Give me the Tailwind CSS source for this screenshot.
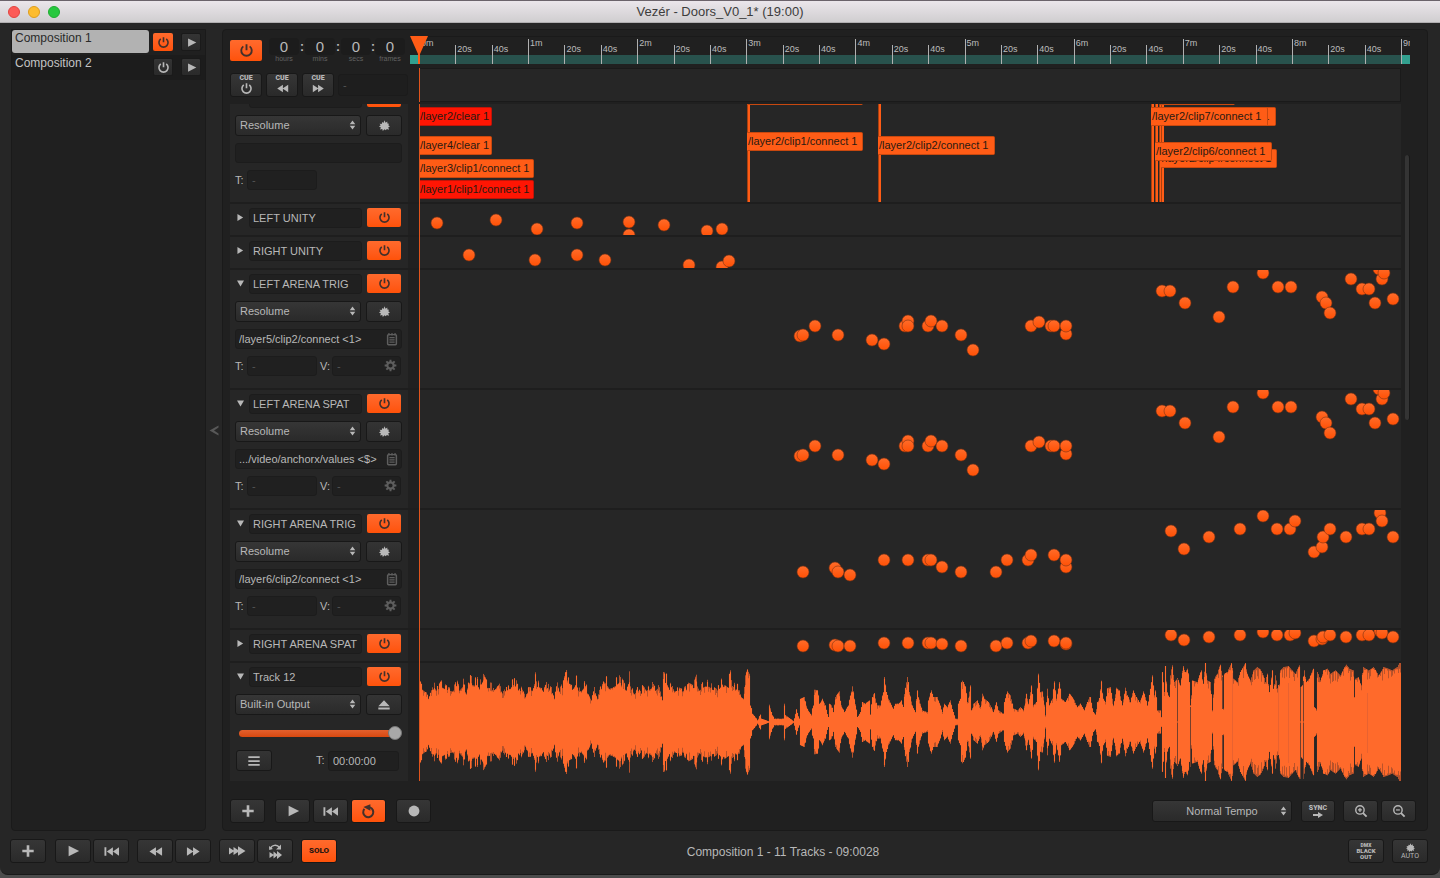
<!DOCTYPE html>
<html lang="en">
<head>
    <meta charset="UTF-8">
    <meta name="viewport" content="width=device-width, initial-scale=1.0">
    <title>Vezér - Doors_V0_1* (19:00)</title>
    <script src="https://cdn.jsdelivr.net/npm/@tailwindcss/browser@4"></script>
</head>
<body class="bg-[#4c4c4c] h-screen flex flex-col overflow-hidden font-['Liberation_Sans',Arial,sans-serif] text-[11px] text-[#b8b8b8]">

    <!-- Icons -->
    <svg class="hidden" aria-hidden="true">
        <symbol id="i-power" viewBox="0 0 16 16"><path d="M4.6 3.6a5.6 5.6 0 1 0 6.8 0M8 1.4v6.2" fill="none" stroke="currentColor" stroke-width="2"/></symbol>
        <symbol id="i-play" viewBox="0 0 16 16"><path d="M3 2 15 8 3 14z" fill="currentColor"/></symbol>
        <symbol id="i-plus" viewBox="0 0 16 16"><path d="M8 1.500v13M1.500 8h13" stroke="currentColor" stroke-width="3"/></symbol>
        <symbol id="i-start" viewBox="0 0 16 16"><path d="M.5 3.5h2v9h-2zM9.5 3.5v9L3 8zM16 3.5v9L9.5 8z" fill="currentColor"/></symbol>
        <symbol id="i-rew" viewBox="0 0 16 16"><path d="M8.5 3.5v9L1.5 8zM15 3.5v9L8 8z" fill="currentColor"/></symbol>
        <symbol id="i-fwd" viewBox="0 0 16 16"><path d="M1 3.5v9L8 8zM7.5 3.5v9l7-4.500z" fill="currentColor"/></symbol>
        <symbol id="i-fff" viewBox="0 0 18 16"><path d="M1 4.500v7L6.500 8zM5.500 4v8l6-4zM10 3.200v9.600L17.500 8z" fill="currentColor"/></symbol>
        <symbol id="i-loopfff" viewBox="0 0 16 16"><path d="M2.500 9v6L7 12zM6.500 8.500v7l4.500-3.500zM10 8v8l5-4z" fill="currentColor"/><path d="M3.500 5.500C4.500 2 10 1 12.500 4.500" fill="none" stroke="currentColor" stroke-width="1.500"/><path d="M14 1.500v5H9zM2 3l.2 4L6 6z" fill="currentColor"/></symbol>
        <symbol id="i-loop" viewBox="0 0 16 16"><path d="M3.600 5.200A5.400 5.400 0 1 0 9.500 3.600" fill="none" stroke="currentColor" stroke-width="2.200"/><path d="M10 .2v7L2.500 3.200z" fill="currentColor"/></symbol>
        <symbol id="i-rec" viewBox="0 0 16 16"><circle cx="8" cy="8" r="6.200" fill="currentColor"/></symbol>
        <symbol id="i-bug" viewBox="0 0 16 16"><path d="M8 .5 9.500 4l2.500-1.800.2 3 2.300.3-1 2.300L16 9.500l-2.500 1.200L14.500 14l-3.200-1-1.300 2-2-1.400L5.500 16l-.7-3-3.300.8 1.300-3L0 9.500l2.500-1.700L.8 5.500l3.200.2L4.500 3l2 1.200z" fill="currentColor"/></symbol>
        <symbol id="i-list" viewBox="0 0 16 16"><rect x="3" y="3" width="10" height="11.500" rx="1" fill="none" stroke="currentColor" stroke-width="1.700"/><path d="M4.500 1v3M8 1v3M11.500 1v3M5 6.500h6M5 9h6M5 11.500h6" stroke="currentColor" stroke-width="1.400"/></symbol>
        <symbol id="i-gear" viewBox="0 0 16 16"><circle cx="8" cy="8" r="3.900" fill="none" stroke="currentColor" stroke-width="2.600"/><path d="M8 .8v3M8 12.200v3M.8 8h3M12.200 8h3M2.900 2.900 5 5M11 11l2.100 2.100M2.900 13.100 5 11M11 5l2.100-2.100" stroke="currentColor" stroke-width="2.400"/></symbol>
        <symbol id="i-eject" viewBox="0 0 16 16"><path d="M8 2.500 14.500 9.500h-13zM1.500 10.800h13V13h-13z" fill="currentColor"/></symbol>
        <symbol id="i-menu" viewBox="0 0 16 16"><path d="M1.500 3.500h13M1.500 8h13M1.500 12.500h13" stroke="currentColor" stroke-width="2"/></symbol>
        <symbol id="i-updown" viewBox="0 0 8 12"><path d="M4 .5 7.300 5H.7zM4 11.500.7 7h6.600z" fill="currentColor"/></symbol>
        <symbol id="i-zoomin" viewBox="0 0 16 16"><circle cx="6.800" cy="6.800" r="4.800" fill="none" stroke="currentColor" stroke-width="1.600"/><path d="m10.400 10.400 4 4" stroke="currentColor" stroke-width="2.200"/><path d="M6.800 4.600V9M4.600 6.800H9" stroke="currentColor" stroke-width="1.400"/></symbol>
        <symbol id="i-zoomout" viewBox="0 0 16 16"><circle cx="6.800" cy="6.800" r="4.800" fill="none" stroke="currentColor" stroke-width="1.600"/><path d="m10.400 10.400 4 4" stroke="currentColor" stroke-width="2.200"/><path d="M4.600 6.800H9" stroke="currentColor" stroke-width="1.400"/></symbol>
        <symbol id="i-arrow" viewBox="0 0 10 6"><path d="M0 2h5V0l5 3-5 3V4H0z" fill="currentColor"/></symbol>
    </svg>

    <!-- Title bar -->
    <header class="relative h-[23px] shrink-0 flex items-center justify-center border-t border-[#6b636b] border-b border-b-[#b0aeb0] bg-linear-to-b from-[#ebe6eb] to-[#d0ced0]">
        <div class="absolute left-2 flex gap-2">
            <button aria-label="Close" class="w-3 h-3 rounded-full bg-[#fc5b57] border border-[#e2443f]"></button>
            <button aria-label="Minimize" class="w-3 h-3 rounded-full bg-[#fdbc2e] border border-[#df9d1c]"></button>
            <button aria-label="Zoom" class="w-3 h-3 rounded-full bg-[#27c83f] border border-[#1fac31]"></button>
        </div>
        <h1 class="text-[13px] text-[#3c3c3c]">Vezér - Doors_V0_1* (19:00)</h1>
    </header>

    <div class="flex-1 min-h-0 mb-[3px] flex flex-col bg-[#262626] rounded-b-lg border-b border-[#191919]">
        <div class="flex-1 min-h-0 flex pt-[6px] pl-[11px] pr-3">

            <!-- Compositions -->
            <aside class="w-[195px] shrink-0 bg-[#202020] border border-[#1a1a1a] rounded-b-sm">
                <div class="h-[25px] flex items-start pr-1">
                    <input aria-label="Composition name" value="Composition 1" class="w-[137px] h-[23px] px-[3px] pb-2 rounded-[3px] bg-[#b2b2b2] text-[12px] text-[#2a2a2a] shrink-0">
                    <button aria-label="Enable Composition 1" class="ml-[4px] mt-[3px] w-5 h-[18px] rounded-xs bg-linear-to-b from-[#ff6a2c] to-[#ff5208] text-[#43302a] flex items-center justify-center"><svg class="w-[13px] h-[13px]"><use href="#i-power"/></svg></button>
                    <button aria-label="Play Composition 1" class="ml-auto mt-[3px] w-5 h-[18px] rounded-xs bg-linear-to-b from-[#343434] to-[#2a2a2a] border border-[#1a1a1a] flex items-center justify-center"><svg class="w-[11px] h-[11px]"><use href="#i-play"/></svg></button>
                </div>
                <div class="h-[25px] flex items-start pr-1 bg-[#1c1c1c]">
                    <input aria-label="Composition name" value="Composition 2" class="w-[137px] h-[23px] px-[3px] pb-2 rounded-[3px] text-[12px] text-[#c4c4c4] shrink-0">
                    <button aria-label="Enable Composition 2" class="ml-[4px] mt-[3px] w-5 h-[18px] rounded-xs bg-linear-to-b from-[#343434] to-[#2a2a2a] border border-[#1a1a1a] flex items-center justify-center"><svg class="w-[13px] h-[13px]"><use href="#i-power"/></svg></button>
                    <button aria-label="Play Composition 2" class="ml-auto mt-[3px] w-5 h-[18px] rounded-xs bg-linear-to-b from-[#343434] to-[#2a2a2a] border border-[#1a1a1a] flex items-center justify-center"><svg class="w-[11px] h-[11px]"><use href="#i-play"/></svg></button>
                </div>
            </aside>

            <button aria-label="Collapse sidebar" class="w-4 shrink-0 flex items-center justify-center text-[#585858]">
                <svg class="w-[10px] h-[11px]" viewBox="0 0 10 11"><path d="M9.500.5v2L5 5.500l4.500 3v2L.5 5.500z" fill="currentColor"/></svg>
            </button>

            <!-- Composition editor -->
            <main class="flex-1 min-w-0 flex flex-col bg-[#202020] border border-[#1a1a1a] rounded-sm pl-[7px]">
                <div class="h-[74px] shrink-0 flex pr-[17px]">
                    <div class="w-[180px] shrink-0">
                        <div class="flex items-start pt-[8px] h-[43px]">
                            <button aria-label="Enable composition" class="mt-[2px] w-8 h-[21px] rounded-xs bg-linear-to-b from-[#ff6a2c] to-[#ff5208] text-[#43302a] flex items-center justify-center"><svg class="w-[15px] h-[15px]"><use href="#i-power"/></svg></button>
                            <div class="ml-[7px] flex-1 flex text-center pr-1">
                                <div class="w-[30px]"><output class="block h-[17px] leading-[18px] rounded-sm bg-[#1c1c1c] text-[15px]">0</output><span class="block text-[7px] leading-[8px] text-[#626262]">hours</span></div>
                                <span class="w-[6px] leading-[18px] text-[12px] font-bold">:</span>
                                <div class="w-[30px]"><output class="block h-[17px] leading-[18px] rounded-sm bg-[#1c1c1c] text-[15px]">0</output><span class="block text-[7px] leading-[8px] text-[#626262]">mins</span></div>
                                <span class="w-[6px] leading-[18px] text-[12px] font-bold">:</span>
                                <div class="w-[30px]"><output class="block h-[17px] leading-[18px] rounded-sm bg-[#1c1c1c] text-[15px]">0</output><span class="block text-[7px] leading-[8px] text-[#626262]">secs</span></div>
                                <span class="w-[4px] leading-[18px] text-[12px] font-bold">:</span>
                                <div class="w-[30px]"><output class="block h-[17px] leading-[18px] rounded-sm bg-[#1c1c1c] text-[15px]">0</output><span class="block text-[7px] leading-[8px] text-[#626262]">frames</span></div>
                            </div>
                        </div>
                        <div class="flex gap-1 pr-[2px]">
                            <button aria-label="Cue toggle" class="w-8 h-[24px] shrink-0 rounded-[3px] bg-linear-to-b from-[#363636] to-[#2a2a2a] border border-[#181818] flex flex-col items-center justify-center"><span class="text-[7px] leading-[7px] font-black font-[Roboto,sans-serif]">CUE</span><svg class="w-[13px] h-[13px]"><use href="#i-power"/></svg></button>
                            <button aria-label="Previous cue" class="w-8 h-[24px] shrink-0 rounded-[3px] bg-linear-to-b from-[#363636] to-[#2a2a2a] border border-[#181818] flex flex-col items-center justify-center"><span class="text-[7px] leading-[7px] font-black font-[Roboto,sans-serif]">CUE</span><svg class="w-[13px] h-[13px]"><use href="#i-rew"/></svg></button>
                            <button aria-label="Next cue" class="w-8 h-[24px] shrink-0 rounded-[3px] bg-linear-to-b from-[#363636] to-[#2a2a2a] border border-[#181818] flex flex-col items-center justify-center"><span class="text-[7px] leading-[7px] font-black font-[Roboto,sans-serif]">CUE</span><svg class="w-[13px] h-[13px]"><use href="#i-fwd"/></svg></button>
                            <input aria-label="Cue name" placeholder="-" class="flex-1 min-w-0 mt-px h-[22px] px-1 rounded-[3px] bg-[#1e1e1e] border border-[#1b1b1b] placeholder:text-[#555]">
                        </div>
                    </div>
                    <div class="flex-1 min-w-0 relative">
                        <div class="mt-[6px] h-7 px-[9px] border-t border-[#1a1a1a] relative overflow-hidden bg-[linear-gradient(#32a08f,#32a08f)] bg-[length:100%_9px] bg-bottom bg-no-repeat">
                            <div id="ruler" class="relative h-full bg-[linear-gradient(#28524d,#28524d)] bg-[length:100%_9px] bg-bottom bg-no-repeat"></div>
                        </div>
                        <div class="mt-1 ml-[9px] mr-[9px] h-[34px] bg-[#262626] border-y border-r border-[#1a1a1a]"></div>
                        <svg class="absolute left-0 top-[6px] w-[18px] h-[66px]" viewBox="0 0 18 66"><path d="M0 0h18l-8 18v10h-2V18z" fill="#ff5c16"/><path d="M9 32h1v34H9z" fill="#e0541c"/></svg>
                    </div>
                </div>

                <div class="flex-1 min-h-0 flex pr-[17px]">
                    <div class="flex-1 min-w-0 relative overflow-hidden">
                        <div id="tracks" class="-mt-5"></div>
                        <div class="absolute left-[189px] top-0 bottom-0 w-px bg-[#e0541c]"></div>
                    </div>
                    <div class="w-[9px] pl-[4px] pt-[51px] shrink-0"><div class="w-[5px] h-[265px] rounded-full bg-[#343434] border-r border-[#181818]"></div></div>
                </div>

                <!-- Editor footer -->
                <div class="h-[49px] shrink-0 flex items-start pt-[18px] pr-[11px]">
                    <button aria-label="Add track" class="w-[35px] h-6 rounded-[3px] bg-linear-to-b from-[#363636] to-[#2a2a2a] border border-[#181818] flex items-center justify-center"><svg class="w-[14px] h-[14px]"><use href="#i-plus"/></svg></button>
                    <button aria-label="Play" class="ml-[10px] w-[35px] h-6 rounded-[3px] bg-linear-to-b from-[#363636] to-[#2a2a2a] border border-[#181818] flex items-center justify-center"><svg class="w-[14px] h-[14px]"><use href="#i-play"/></svg></button>
                    <button aria-label="Go to start" class="ml-[3px] w-[35px] h-6 rounded-[3px] bg-linear-to-b from-[#363636] to-[#2a2a2a] border border-[#181818] flex items-center justify-center"><svg class="w-[15px] h-[15px]"><use href="#i-start"/></svg></button>
                    <button aria-label="Loop" class="ml-[3px] w-[35px] h-6 rounded-[3px] bg-linear-to-b from-[#ff6a2c] to-[#ff5208] border border-[#181818] text-[#43302a] flex items-center justify-center"><svg class="w-[15px] h-[15px]"><use href="#i-loop"/></svg></button>
                    <button aria-label="Record" class="ml-[10px] w-[35px] h-6 rounded-[3px] bg-linear-to-b from-[#363636] to-[#2a2a2a] border border-[#181818] flex items-center justify-center"><svg class="w-[14px] h-[14px]"><use href="#i-rec"/></svg></button>

                    <div class="relative ml-auto mt-px">
                        <select aria-label="Tempo" class="appearance-none w-[140px] h-[22px] text-center [text-align-last:center] rounded-[3px] bg-linear-to-b from-[#363636] to-[#2a2a2a] border border-[#181818]"><option>Normal Tempo</option></select>
                        <svg class="absolute right-[5px] top-[6px] w-[7px] h-[10px] pointer-events-none"><use href="#i-updown"/></svg>
                    </div>
                    <button aria-label="Sync" class="ml-[9px] mt-px w-[34px] h-[22px] rounded-[3px] bg-linear-to-b from-[#363636] to-[#2a2a2a] border border-[#181818] flex flex-col items-center justify-center"><span class="text-[7px] leading-[8px] font-black font-[Roboto,sans-serif]">SYNC</span><svg class="w-[10px] h-[6px]"><use href="#i-arrow"/></svg></button>
                    <button aria-label="Zoom in" class="ml-[8px] mt-px w-[35px] h-[22px] rounded-[3px] bg-linear-to-b from-[#363636] to-[#2a2a2a] border border-[#181818] flex items-center justify-center"><svg class="w-[14px] h-[14px]"><use href="#i-zoomin"/></svg></button>
                    <button aria-label="Zoom out" class="ml-[3px] mt-px w-[35px] h-[22px] rounded-[3px] bg-linear-to-b from-[#363636] to-[#2a2a2a] border border-[#181818] flex items-center justify-center"><svg class="w-[14px] h-[14px]"><use href="#i-zoomout"/></svg></button>
                </div>
            </main>
        </div>

        <!-- Global transport -->
        <footer class="h-[43px] shrink-0 grid grid-cols-[1fr_auto_1fr] items-start pt-2 pl-[10px] pr-3">
            <div class="flex">
                <button aria-label="Add composition" class="w-[36px] h-6 rounded-[3px] bg-linear-to-b from-[#363636] to-[#2a2a2a] border border-[#181818] flex items-center justify-center"><svg class="w-[14px] h-[14px]"><use href="#i-plus"/></svg></button>
                <button aria-label="Play all" class="ml-[9px] w-[36px] h-6 rounded-[3px] bg-linear-to-b from-[#363636] to-[#2a2a2a] border border-[#181818] flex items-center justify-center"><svg class="w-[14px] h-[14px]"><use href="#i-play"/></svg></button>
                <button aria-label="All to start" class="ml-[2px] w-[36px] h-6 rounded-[3px] bg-linear-to-b from-[#363636] to-[#2a2a2a] border border-[#181818] flex items-center justify-center"><svg class="w-[15px] h-[15px]"><use href="#i-start"/></svg></button>
                <button aria-label="Rewind" class="ml-[8px] w-[36px] h-6 rounded-[3px] bg-linear-to-b from-[#363636] to-[#2a2a2a] border border-[#181818] flex items-center justify-center"><svg class="w-[15px] h-[15px]"><use href="#i-rew"/></svg></button>
                <button aria-label="Forward" class="ml-[2px] w-[36px] h-6 rounded-[3px] bg-linear-to-b from-[#363636] to-[#2a2a2a] border border-[#181818] flex items-center justify-center"><svg class="w-[15px] h-[15px]"><use href="#i-fwd"/></svg></button>
                <button aria-label="Play next" class="ml-[8px] w-[36px] h-6 rounded-[3px] bg-linear-to-b from-[#363636] to-[#2a2a2a] border border-[#181818] flex items-center justify-center"><svg class="w-[18px] h-4"><use href="#i-fff"/></svg></button>
                <button aria-label="Loop all" class="ml-[2px] w-[36px] h-6 rounded-[3px] bg-linear-to-b from-[#363636] to-[#2a2a2a] border border-[#181818] flex items-center justify-center"><svg class="w-4 h-4"><use href="#i-loopfff"/></svg></button>
                <button class="ml-[8px] w-[36px] h-6 rounded-[3px] bg-linear-to-b from-[#ff6a2c] to-[#ff5208] border border-[#181818] text-[#2b1710] text-[8px] leading-[8px] font-black font-[Roboto,sans-serif]">SOLO</button>
            </div>
            <p class="pl-32 pt-[5px] text-[12px] leading-4">Composition 1 - 11 Tracks - 09:0028</p>
            <div class="flex justify-end gap-2">
                <button aria-label="DMX blackout" class="w-[36px] h-6 rounded-[3px] bg-linear-to-b from-[#363636] to-[#2a2a2a] border border-[#181818] flex flex-col items-center justify-center font-black font-[Roboto,sans-serif]"><span class="text-[5px] leading-[5px]">DMX</span><span class="text-[6px] leading-[6px]">BLACK</span><span class="text-[6px] leading-[6px]">OUT</span></button>
                <button aria-label="Auto map" class="w-[36px] h-6 rounded-[3px] bg-linear-to-b from-[#363636] to-[#2a2a2a] border border-[#181818] flex flex-col items-center justify-center font-[Roboto,sans-serif]"><svg class="w-[9px] h-[9px]"><use href="#i-bug"/></svg><span class="text-[7px] leading-[8px]">AUTO</span></button>
            </div>
        </footer>
    </div>

    <script>
        // lane coordinates are given on a 982px wide timeline (9 minutes)
        const LANE = 982;
        const pct = x => (x / LANE * 100).toFixed(3) + '%';

        const arenaLeft = [[381,66],[384,65],[396,56],[419,65],[453,70],[465,74],[486,56],[489,51],[489,56],[509,56],[512,51],[523,56],[542,65],[554,80],[612,56],[620,52],[632,56],[635,56],[647,64],[647,56],
            [743,21],[751,21],[766,33],[800,47],[814,17],[844,3],[859,17],[872,17],[903,27],[907,33],[911,43],[932,9],[943,19],[950,19],[956,33],[960,-1],[963,9],[965,3],[974,29]];
        const arenaRight = [[384,62],[416,58],[419,62],[431,65],[465,50],[489,50],[509,50],[512,50],[523,57],[542,62],[577,62],[588,50],[609,50],[612,45],[635,45],[647,57],[647,50],
            [752,21],[765,39],[790,27],[821,19],[844,6],[858,19],[871,19],[876,11],[895,42],[903,37],[904,27],[911,19],[927,27],[943,19],[950,19],[961,3],[963,11],[974,27]];

        const tracks = [
            { name: '', open: true, osc: '', flat: true, clips: [
                { x: 0, y: 23, w: 73, t: '/layer2/clear 1', red: true },
                { x: 0, y: 52, w: 73, t: '/layer4/clear 1' },
                { x: 0, y: 75, w: 115, t: '/layer3/clip1/connect 1' },
                { x: 0, y: 96, w: 115, t: '/layer1/clip1/connect 1', red: true },
                { x: 328, y: 2, w: 116, t: '' },
                { x: 328, y: 48, w: 116, t: '/layer2/clip1/connect 1', line: true },
                { x: 459, y: 52, w: 117, t: '/layer2/clip2/connect 1', line: true },
                { x: 741, y: 2, w: 75, t: '' },
                { x: 740, y: 23, w: 117, t: '/layer2/clip5/connect 1', line: true },
                { x: 742, y: 65, w: 116, t: '/layer2/clip4/connect 1', line: true },
                { x: 732, y: 23, w: 117, t: '/layer2/clip7/connect 1', line: true },
                { x: 736, y: 58, w: 117, t: '/layer2/clip6/connect 1', line: true } ] },
            { name: 'LEFT UNITY', dots: [[18,19],[77,16],[118,25],[158,19],[210,31],[210,18],[245,21],[288,27],[303,25]] },
            { name: 'RIGHT UNITY', dots: [[50,18],[116,23],[158,18],[186,23],[270,28],[303,30],[310,24]] },
            { name: 'LEFT ARENA TRIG', open: true, osc: '/layer5/clip2/connect <1>', dots: arenaLeft },
            { name: 'LEFT ARENA SPAT', open: true, osc: '.../video/anchorx/values <$>', dots: arenaLeft },
            { name: 'RIGHT ARENA TRIG', open: true, osc: '/layer6/clip2/connect <1>', dots: arenaRight },
            { name: 'RIGHT ARENA SPAT', dots: arenaRight.map(([x, y]) => [x, Math.round(y / 4)]) },
            { name: 'Track 12', open: true, audio: true }
        ];

        const icon = (id, cls) => `<svg class="${cls}"><use href="#i-${id}"/></svg>`;
        const esc = s => s.replace(/</g, '&lt;').replace(/>/g, '&gt;');
        const button = 'w-[36px] h-[21px] shrink-0 rounded-[3px] bg-linear-to-b from-[#343434] to-[#2a2a2a] border border-[#181818] flex items-center justify-center';
        const field = 'h-5 rounded-[3px] bg-[#202020] border border-[#1c1c1c] placeholder:text-[#555]';

        function header(t) {
            return `<div class="flex items-start h-5">
                <button aria-label="Toggle ${t.name}" class="w-[19px] h-[18px] pl-[7px] flex items-center"><svg class="w-[7px] h-[7px]" viewBox="0 0 8 8"><path d="${t.open ? 'M0 .5h8L4 7.500z' : 'M.5 0v8L7 4z'}" fill="currentColor"/></svg></button>
                <input aria-label="Track name" value="${t.name}" class="${field} w-[113px] px-[3px]">
                <button aria-label="Enable ${t.name}" class="ml-[5px] w-[34px] h-[19px] rounded-xs bg-linear-to-b from-[#ff6a2c] to-[#ff5208] text-[#43302a] flex items-center justify-center">${icon('power', 'w-[13px] h-[13px]')}</button>
            </div>`;
        }

        function output(t) {
            return `<div class="flex justify-between mt-[7px] pl-[5px] pr-[6px]">
                <div class="relative">
                    <select aria-label="Output" class="appearance-none w-[126px] h-[21px] px-1 rounded-[3px] bg-linear-to-b from-[#363636] to-[#2a2a2a] border border-[#181818]"><option>${t.audio ? 'Built-in Output' : 'Resolume'}</option></select>
                    ${icon('updown', 'absolute right-[5px] top-[5px] w-[7px] h-[10px] pointer-events-none')}
                </div>
                <button aria-label="${t.audio ? 'Eject' : 'Learn'}" class="${button}">${t.audio ? icon('eject', 'w-[14px] h-[14px]') : icon('bug', 'w-[11px] h-[11px]')}</button>
            </div>`;
        }

        function oscFields(t, i) {
            return `<div class="relative mt-[7px] pl-[5px] pr-[6px]">
                <input aria-label="OSC address" value="${esc(t.osc)}" class="${field} w-full pl-[3px]">
                ${t.flat ? '' : icon('list', 'absolute right-[9px] top-[3px] w-[14px] h-[14px] text-[#5e5e5e]')}
            </div>
            <div class="relative flex items-center mt-[7px] pl-[5px] pr-[7px]">
                <label for="t${i}" class="w-3">T:</label>
                <input id="t${i}" placeholder="-" class="${field} w-[70px] px-1">
                ${t.flat ? '' : `<label for="v${i}" class="w-3 ml-auto">V:</label>
                <input id="v${i}" placeholder="-" class="${field} w-[69px] px-1">
                ${icon('gear', 'absolute right-[11px] top-[3px] w-[13px] h-[13px] text-[#5e5e5e]')}`}
            </div>`;
        }

        function audioFields(t, i) {
            return `<div class="relative flex items-center mt-[11px] h-[14px] ml-[9px] mr-[6px]">
                <div class="h-[7px] flex-1 mr-1 rounded-sm bg-linear-to-b from-[#e2602c] to-[#d8480e]"></div>
                <input type="range" aria-label="Volume" value="100" class="absolute inset-0 w-full appearance-none bg-transparent [&::-webkit-slider-thumb]:appearance-none [&::-webkit-slider-thumb]:w-[14px] [&::-webkit-slider-thumb]:h-[14px] [&::-webkit-slider-thumb]:rounded-full [&::-webkit-slider-thumb]:bg-[#a8a8a8] [&::-webkit-slider-thumb]:border [&::-webkit-slider-thumb]:border-[#777]">
            </div>
            <div class="flex items-center mt-[10px] pl-[6px] pr-[9px]">
                <button aria-label="Track menu" class="${button}">${icon('menu', 'w-[14px] h-[14px]')}</button>
                <label for="t${i}" class="ml-auto w-3">T:</label>
                <input id="t${i}" value="00:00:00" class="${field} w-[71px] px-1">
            </div>`;
        }

        function clips(list) {
            return list.filter(c => c.line).map(c => `<div class="absolute inset-y-0 w-[3px] bg-[#ff5c16] border-l border-[#a8400f]" style="left:${pct(c.x)}"></div>`).join('') +
                list.map(c => `<div class="absolute h-[19px] pl-px leading-[17px] rounded-r-xs whitespace-nowrap overflow-hidden text-[#2a1a12] border-y border-r ${c.red ? 'bg-[#ff1503] border-[#c01408]' : 'bg-[#ff5c16] border-[#c8480f]'}" style="left:${pct(c.x)};top:${c.y}px;width:${c.w}px">${c.t}</div>`).join('');
        }

        function dots(list) {
            return `<svg class="w-full h-full">
                ${list.map(([x, y]) => `<circle cx="${pct(x)}" cy="${y}" r="6" fill="url(#dot)" stroke="#7a3314" stroke-width=".6"/>`).join('')}
            </svg>`;
        }

        // loudness envelope: [start x, "offset top offset top ..."], three units per pixel, 200 is silence
        const envelope = [
            [0, '0 70 8 90 20 105 28 130 35 105 45 82 52 95 65 75 75 85 88 95 100 100 112 70 120 95 132 70 140 115 148 52 155 62 165 68 173 65 180 85 188 50 195 60 205 80 215 82 225 105 240 85 250 110 260 95 272 85 283 65 290 75 300 100 310 90 318 125 328 95 340 95 345 60 350 45 355 75 365 80 370 105 382 80 395 95 405 130 413 50 420 100 432 75 438 50 443 40 450 85 460 90 470 60 478 95 485 100 498 70 505 110 515 135 525 95 533 130 545 85 551 45 558 55 570 85 578 80 588 70 597 55 603 65 610 70 620 95 629 48 636 90 645 115 655 95 665 110 673 70 680 95 690 90 698 80 708 95 715 85 722 100 728 135 733 50 742 55 750 90 758 70 765 100 775 95 788 100 800 90 808 82 820 88 830 58 840 95 850 80 858 72 870 75 880 90 890 100 900 85 909 62 916 90 925 95 930 55 935 38 940 70 948 90 955 85 965 125 972 130 978 60 983 42 990 55 994 150 1000 175 1015 195 1022 178 1026 190 1048 198 1050 148 1056 170 1060 180 1065 190 1082 190'],
            [361, '0 190 8 190 12 145 16 180 40 198 48 162 56 190 60 130 72 125 80 160 92 178 98 150 103 103 112 105 118 145 126 130 135 150 143 185 148 145 154 150 160 170 164 125 176 108 182 150 193 170 203 150 210 120 217 93 222 130 232 185 240 170 246 140 255 145 266 135 270 178 275 125 281 113 290 150 300 150 308 110 312 65 318 110 325 130 338 160 345 145 355 145 363 135 368 155 374 97 382 65 388 110 395 150 405 170 410 105 415 125 425 165 440 170 444 135 452 105 460 125 470 125 480 150 485 170 492 145 500 155 510 135 518 170 526 190 530 190 533 145 540 130 542 80 547 76 555 92 562 140 570 90 574 165 580 145 590 135 600 155 607 115 612 130 625 140 640 170 647 140 655 165 668 175 672 140 680 108 690 120 700 160 712 165 720 155 730 165 737 115 745 145 753 90 760 150 768 140 774 55 780 110 787 108 796 180 800 100 807 150 815 130 822 78 828 130 838 80 843 130 855 140 868 115 880 130 890 155 900 145 912 165 920 140 928 125'],
            [671, '0 125 8 170 15 178 22 140 28 128 32 76 38 130 45 140 52 98 60 95 66 130 70 150 78 97 86 105 96 150 105 97 112 120 120 140 128 105 138 125 148 140 160 108 172 150 180 100 186 60 192 120 196 105 202 165 210 165 212 185 216 50 222 110 225 32 230 110 236 125 240 60 245 30 252 80 262 68 270 90 278 32 284 50 292 40 298 80 301 150 306 75 320 80 332 45 338 85 345 22 350 75 360 80 367 165 371 70 380 55 389 28 396 60 398 160 402 55 410 50 424 22 430 70 440 80 450 50 465 22 470 55 480 75 490 45 500 35 510 42 520 60 525 80 530 55 537 110 546 45 550 100 556 60 565 130 569 45 580 35 595 32 605 45 615 55 626 30 630 95 636 90 641 45 648 80 656 70 668 40 673 155 680 165 682 50 690 75 700 45 712 40 720 55 735 45 750 60 762 35 768 28 778 40 788 45 791 125 796 70 805 65 812 90 818 35 835 45 850 35 865 60 880 35 895 40 905 45 920 35 928 22 934 22']
        ];

        function waveform() {
            const points = envelope.flatMap(([start, data]) => {
                const n = data.split(' ').map(Number), out = [];
                for (let i = 0; i < n.length; i += 2) out.push([start + n[i] / 3, (200 - n[i + 1]) / 3]);
                return out;
            });
            let seed = 7, k = 0, peak = '', body = '';
            const rand = () => (seed = (seed * 16807) % 2147483647) / 2147483647;
            for (let x = 0; x < LANE; x++) {
                while (k < points.length - 2 && points[k + 1][0] < x) k++;
                const [x0, a0] = points[k], [x1, a1] = points[k + 1];
                let a = a0 + (a1 - a0) * Math.min(1, (x - x0) / (x1 - x0 || 1));
                // keep the steep peaks and dips that fall between two pixels
                for (const p of points) if (Math.abs(p[0] - x) <= 0.5) a = p[1];
                // loud music at the start sits around 27 with short transients on top
                if (x < 320 && a > 28) a = 27 + (a - 27) * (rand() < 0.45 ? 1 : 0.55);
                const b = Math.max(rand() < 0.3 ? a * (0.78 + rand() * 0.15) : a * (0.95 + rand() * 0.05), 0.7);
                peak += `M${x + 0.5} ${(59 - a).toFixed(1)}V${(59 + a).toFixed(1)}`;
                body += `M${x + 0.5} ${(59 - b).toFixed(1)}V${(59 + b).toFixed(1)}`;
            }
            return `<svg class="w-full h-full" viewBox="0 0 982 118" preserveAspectRatio="none">
                <path d="${peak}" stroke="#b4512b"/><path d="${body}" stroke="#ff6a2b" stroke-width="1.100"/>
                <path d="M758.500 16v86M771.500 44v60M803.500 14v32M803.500 72v32M881.500 24v92M884.500 18v98" stroke="#74402c"/>
                <path d="M813.500 10v100M859.500 22v70M869.500 20v80M948.500 30v60" stroke="#e86230"/>
                <path d="M757 59h4M880 59h6" stroke="#ff6a2b"/>
            </svg>`;
        }

        document.getElementById('tracks').innerHTML = `<svg class="absolute w-0 h-0"><linearGradient id="dot" x2="0" y2="1"><stop stop-color="#ff6c2a"/><stop offset="1" stop-color="#ff5005"/></linearGradient></svg>` +
            tracks.map((t, i) => `<div class="flex border-b-2 border-[#1e1e1e] ${t.open ? 'h-[120px]' : 'h-[33px]'}">
                <div class="w-[178px] shrink-0 bg-[#262626] pt-[4px]">
                    ${header(t)}
                    ${t.open ? output(t) + (t.audio ? audioFields(t, i) : oscFields(t, i)) : ''}
                </div>
                <div class="relative flex-1 min-w-0 ml-[11px] bg-[#262626] overflow-hidden">
                    ${t.audio ? waveform() : t.clips ? clips(t.clips) : dots(t.dots)}
                </div>
            </div>`).join('');

        let ticks = '';
        for (let i = 0; i <= 27; i++) {
            const minute = i % 3 === 0;
            ticks += `<div class="absolute bottom-0 border-l border-[#b0b0b0] pl-px text-[9px] leading-[9px] text-[#bcbcbc] ${minute ? 'h-[25px]' : 'h-[19px]'}" style="left:${(i / 27 * 100).toFixed(3)}%">${minute ? i / 3 + 'm' : i % 3 * 20 + 's'}</div>`;
        }
        document.getElementById('ruler').innerHTML = ticks;
    </script>
</body>
</html>
